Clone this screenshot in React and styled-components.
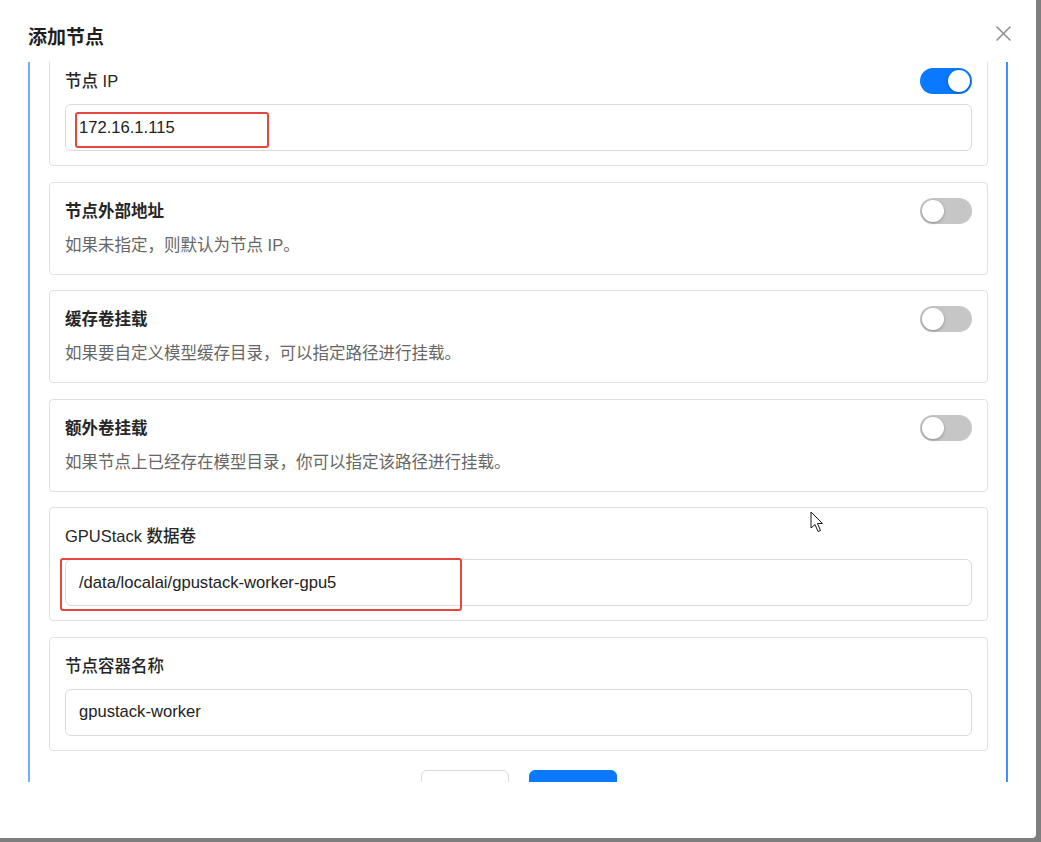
import React from 'react';
import styled, { createGlobalStyle } from 'styled-components';

const GlobalStyle = createGlobalStyle`
  html, body {
    margin: 0;
    padding: 0;
    background: #7e7e7e;
    font-family: "Liberation Sans", "Noto Sans CJK SC", Arial, sans-serif;
  }
`;

const Dialog = styled.div`
  position: relative;
  width: 1036px;
  height: 838px;
  background: #ffffff;
  border-bottom-right-radius: 4px;
  display: flex;
  flex-direction: column;
`;

const Header = styled.div`
  display: flex;
  justify-content: space-between;
  align-items: flex-start;
  height: 62px;
  padding: 0 25px 0 28px;
  box-sizing: border-box;
`;

const Title = styled.h2`
  margin: 26px 0 0;
  font-size: 19px;
  line-height: 24px;
  font-weight: 700;
  color: #1f1f1f;
`;

const CloseButton = styled.button`
  margin-top: 26px;
  width: 15px;
  height: 15px;
  padding: 0;
  border: none;
  background: none;
  cursor: pointer;
  display: flex;
`;

const Body = styled.div`
  margin: 0 28px;
  height: 720px;
  overflow: hidden;
  border-left: 2px solid #6cb0ff;
  border-right: 2px solid #3f8fff;
`;

const Content = styled.div`
  margin-top: -10px;
  padding: 0 18px 0 19px;
  display: flex;
  flex-direction: column;
  gap: 15.5px;
`;

const Card = styled.section`
  border: 1px solid #e0e0e6;
  border-radius: 4px;
  padding: ${p => (p.field ? '16px 15px 14px' : '16px 15px 17px')};
`;

const CardHead = styled.div`
  display: flex;
  align-items: center;
  justify-content: space-between;
  height: 24px;
`;

const Label = styled.span`
  font-size: 16.5px;
  line-height: 24px;
  font-weight: ${p => (p.strong ? 700 : 500)};
  color: #262626;
`;

const Desc = styled.p`
  margin: 10px 0 0;
  font-size: 16.5px;
  line-height: 24px;
  color: #666666;
`;

const Track = styled.span`
  position: relative;
  width: 52px;
  height: 26px;
  border-radius: 13px;
  background: ${p => (p.on ? '#0a78ff' : '#c6c6c6')};
  flex-shrink: 0;
`;

const Knob = styled.span`
  position: absolute;
  top: 2px;
  left: ${p => (p.on ? '28px' : '2px')};
  width: 22px;
  height: 22px;
  border-radius: 50%;
  background: #ffffff;
  box-shadow: 0 1px 3px rgba(0, 0, 0, 0.3);
`;

const InputWrap = styled.div`
  position: relative;
  margin-top: 11px;
`;

const Input = styled.input`
  display: block;
  width: 100%;
  height: 47px;
  box-sizing: border-box;
  padding: 0 13px;
  border: 1px solid #dadade;
  border-radius: 6px;
  font-family: "Liberation Sans", "Noto Sans CJK SC", Arial, sans-serif;
  font-size: 16.6px;
  color: #222222;
  background: #ffffff;
  outline: none;
`;

const Mark = styled.div`
  position: absolute;
  box-sizing: border-box;
  border: 2px solid #e5473d;
  border-radius: 3px;
  pointer-events: none;
`;

const Footer = styled.div`
  display: flex;
  justify-content: center;
  gap: 20px;
  margin-top: 4px;
`;

const Button = styled.button`
  width: 88px;
  height: 40px;
  border-radius: 6px;
  border: 1px solid ${p => (p.primary ? '#0a78ff' : '#d9d9de')};
  background: ${p => (p.primary ? '#0a78ff' : '#ffffff')};
`;

const Cursor = styled.svg`
  position: absolute;
  left: 810px;
  top: 511px;
  pointer-events: none;
`;

const Switch = ({ on }) => (
  <Track on={on}>
    <Knob on={on} />
  </Track>
);

const switchCards = [
  { title: '节点外部地址', desc: '如果未指定，则默认为节点 IP。' },
  { title: '缓存卷挂载', desc: '如果要自定义模型缓存目录，可以指定路径进行挂载。' },
  { title: '额外卷挂载', desc: '如果节点上已经存在模型目录，你可以指定该路径进行挂载。' },
];

export default function App() {
  return (
    <>
      <GlobalStyle />
      <Dialog>
        <Header>
          <Title>添加节点</Title>
          <CloseButton aria-label="关闭">
            <svg width="15" height="15" viewBox="0 0 15 15">
              <path d="M1 1L14 14M14 1L1 14" stroke="#8c8c8c" strokeWidth="1.5" strokeLinecap="round" />
            </svg>
          </CloseButton>
        </Header>
        <Body>
          <Content>
            <Card field>
              <CardHead>
                <Label>节点 IP</Label>
                <Switch on />
              </CardHead>
              <InputWrap>
                <Input defaultValue="172.16.1.115" />
                <Mark style={{ left: 10, top: 8, width: 194, height: 36 }} />
              </InputWrap>
            </Card>

            {switchCards.map(c => (
              <Card key={c.title}>
                <CardHead>
                  <Label strong>{c.title}</Label>
                  <Switch />
                </CardHead>
                <Desc>{c.desc}</Desc>
              </Card>
            ))}

            <Card field>
              <CardHead>
                <Label>GPUStack 数据卷</Label>
              </CardHead>
              <InputWrap>
                <Input defaultValue="/data/localai/gpustack-worker-gpu5" />
                <Mark style={{ left: -5, top: -1, width: 402, height: 53 }} />
              </InputWrap>
            </Card>

            <Card field>
              <CardHead>
                <Label>节点容器名称</Label>
              </CardHead>
              <InputWrap>
                <Input defaultValue="gpustack-worker" />
              </InputWrap>
            </Card>

            <Footer>
              <Button aria-label="取消" />
              <Button primary aria-label="确定" />
            </Footer>
          </Content>
        </Body>
        <Cursor width="14" height="22" viewBox="0 0 14 22">
          <path d="M1 1V17L5 13.5L8 20.5L10.5 19.5L7.5 12.5H12.5Z" fill="#ffffff" stroke="#1a1a1a" strokeWidth="1" strokeLinejoin="round" />
        </Cursor>
      </Dialog>
    </>
  );
}
